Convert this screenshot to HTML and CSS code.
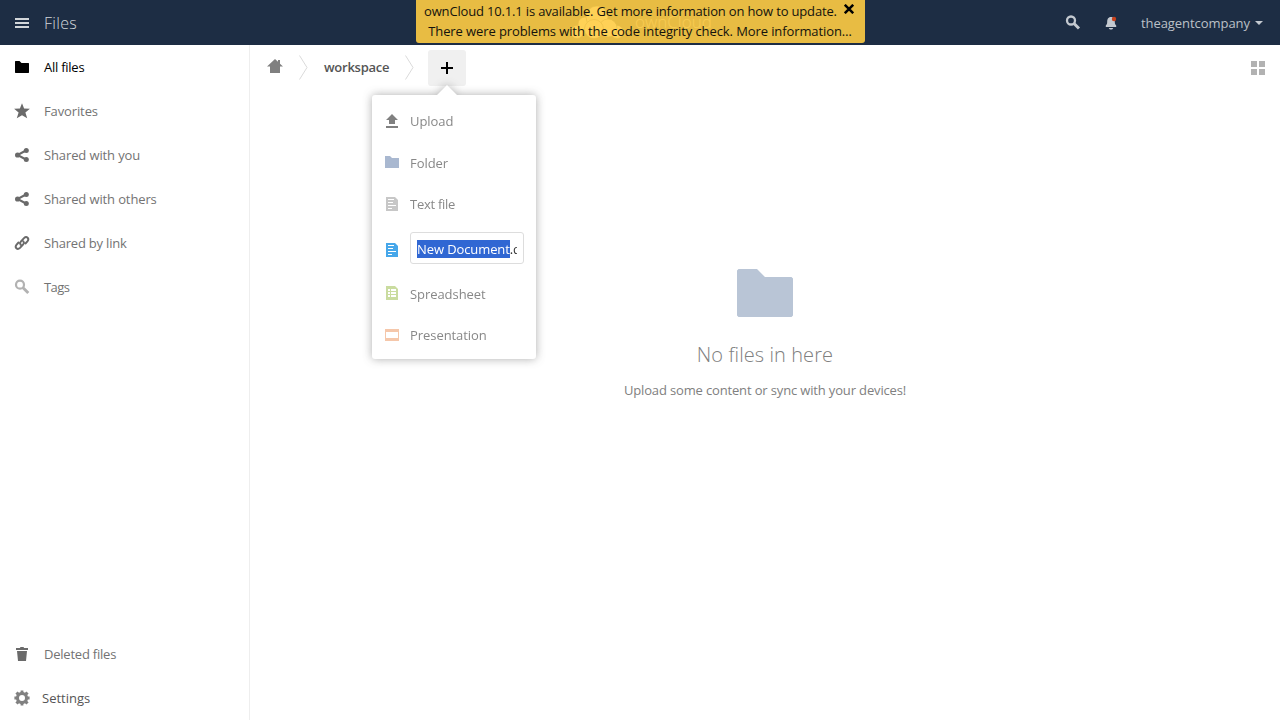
FILE: index.html
```html
<!DOCTYPE html>
<html lang="en">
<head>
<meta charset="utf-8">
<title>Files - ownCloud</title>
<link rel="stylesheet" href="styles.css">
</head>
<body>
<header class="header">
  <div class="header-left">
    <svg class="icon" width="16" height="16" viewBox="0 0 16 16" fill="#d2d6da"><path d="M1 3h14v2H1zM1 7h14v2H1zM1 11h14v2H1z"/></svg>
    <span class="app-name">Files</span>
  </div>
  <div class="brand">
    <svg width="56" height="34" viewBox="0 0 56 34" fill="#fff" stroke="#1d2d44" stroke-opacity=".6"><circle cx="8" cy="27" r="6.500"/><circle cx="16" cy="19" r="7"/><circle cx="48" cy="27" r="6.500"/><circle cx="28" cy="12" r="11"/><circle cx="39" cy="23" r="9"/><circle cx="25" cy="24" r="9.500"/></svg>
    <span>ownCloud</span>
  </div>
  <div class="header-right">
    <svg class="icon search" width="16" height="16" viewBox="0 0 16 16" fill="none" stroke="#c4c9d0"><circle cx="6" cy="5.500" r="4" stroke-width="2.300"/><path d="M9 8.500l5 5" stroke-width="3"/></svg>
    <svg class="icon bell" width="16" height="16" viewBox="0 0 16 16"><path fill="#c4c9d0" d="M8 2C5 2 4.200 4.500 4.200 7c0 2-.6 2.500-1.400 3.500V12h10.400v-1.500c-.8-1-1.400-1.500-1.400-3.500C11.800 4.500 11 2 8 2zM5.800 13h4.400c-.4 1.300-1 1.500-2.200 1.500S6.200 14.300 5.800 13z"/><circle cx="11" cy="4" r="2.200" fill="#c7411c"/></svg>
    <span class="user">theagentcompany</span>
    <svg width="8" height="4" viewBox="0 0 8 4" fill="#c4c9d0"><path d="M0 0h8L4 4z"/></svg>
  </div>
  <div class="notice">
    <div class="notice-line update">ownCloud 10.1.1 is available. Get more information on how to update.<svg class="close" width="10" height="10" viewBox="0 0 10 10" stroke="#000" stroke-width="2.500"><path d="M.8.8l8.400 8.400M9.200.8L.8 9.200"/></svg></div>
    <div class="notice-line">There were problems with the code integrity check. More information…</div>
  </div>
</header>
<div class="layout">
  <nav class="sidebar">
    <a class="nav-item active"><svg class="icon" width="16" height="16" viewBox="0 0 16 16"><path d="M1.500 2h4l2 2h7l.5.5v9l-.5.5h-13l-.5-.5v-11z"/></svg>All files</a>
    <a class="nav-item"><svg class="icon" width="16" height="16" viewBox="0 0 16 16"><path d="M8 .3l2.100 5.200 5.800.3-4.500 3.600 1.800 5.900L8 12.200l-5.200 3.100 1.800-5.900L.1 5.800l5.800-.3z"/></svg>Favorites</a>
    <a class="nav-item"><svg class="icon" width="16" height="16" viewBox="0 0 16 16"><path d="M12 3.500L3.500 8l8.500 4.500" fill="none" stroke="#6a6a6a" stroke-width="2"/><circle cx="12.300" cy="3.400" r="2.500"/><circle cx="3.600" cy="8" r="2.600"/><circle cx="12.300" cy="12.600" r="2.500"/></svg>Shared with you</a>
    <a class="nav-item"><svg class="icon" width="16" height="16" viewBox="0 0 16 16"><path d="M12 3.500L3.500 8l8.500 4.500" fill="none" stroke="#6a6a6a" stroke-width="2"/><circle cx="12.300" cy="3.400" r="2.500"/><circle cx="3.600" cy="8" r="2.600"/><circle cx="12.300" cy="12.600" r="2.500"/></svg>Shared with others</a>
    <a class="nav-item link"><svg class="icon" width="16" height="16" viewBox="0 0 16 16" fill="none" stroke="#6a6a6a" stroke-width="2"><path d="M7.500 10.500C5.900 9.500 5.800 7.700 7 6.400l3-3.300c2.700-2.600 5.700.4 3.400 3.300L11 9M8.500 5.500c1.600 1 1.700 2.800.5 4.100l-3 3.300c-2.700 2.600-5.700-.4-3.400-3.300L5 7"/></svg>Shared by link</a>
    <a class="nav-item tags"><svg class="icon" width="16" height="16" viewBox="0 0 16 16" fill="none" stroke="#b2b2b2"><circle cx="6" cy="5.700" r="4" stroke-width="2.200"/><path d="M9 8.700l5.300 5.300" stroke-width="2.900"/></svg>Tags</a>
    <a class="nav-item trash"><svg class="icon" width="16" height="16" viewBox="0 0 16 16"><path d="M6.500 1h3l.6 1H14v2H2V2h3.900zM3 5h10l-1 10H4z"/></svg>Deleted files</a>
    <a class="nav-item settings"><svg class="icon" width="16" height="16" viewBox="0 0 16 16" fill="#808080"><path fill-rule="evenodd" d="M6.600.4h2.800v1.700l1.600.6 1.400-1.300 2.200 2.200L13.300 5l.6 1.600h1.700v2.800h-1.700l-.6 1.600 1.300 1.400-2.200 2.200-1.400-1.300-1.600.6v1.700H6.600v-1.700L5 13.300l-1.400 1.300-2.200-2.200L2.700 11l-.6-1.600H.4V6.600h1.700L2.700 5 1.400 3.600l2.200-2.200L5 2.700l1.600-.6zM8 5a3 3 0 100 6 3 3 0 000-6z"/></svg>Settings</a>
  </nav>
  <main class="content">
    <div class="controls">
      <svg class="home" width="16" height="16" viewBox="0 0 16 16" fill="#808080"><path d="M8 1L0 8.500h3V15h10V8.500h3L13 5.700V2h-2v1.800z"/></svg>
      <svg class="sep" width="9" height="25" viewBox="0 0 9 25" fill="none" stroke="#dadada"><path d="M.5.5l7.500 12-7.500 12"/></svg>
      <span class="crumb">workspace</span>
      <svg class="sep" width="9" height="25" viewBox="0 0 9 25" fill="none" stroke="#dadada"><path d="M.5.5l7.500 12-7.500 12"/></svg>
      <button class="add" aria-label="New"><svg width="12" height="12" viewBox="0 0 12 12"><path d="M5 0h2v5h5v2H7v5H5V7H0V5h5z"/></svg></button>
      <svg class="grid-toggle" width="14" height="14" viewBox="0 0 14 14" fill="#b2b2b2"><path d="M0 0h6v6H0zM8 0h6v6H8zM0 8h6v6H0zM8 8h6v6H8z"/></svg>
    </div>
    <section class="empty">
      <svg width="56" height="48" viewBox="0 0 56 48" fill="#b9c5d6"><path d="M1.500 0H20l8 8h26.500L56 9.500v37L54.500 48h-53L0 46.500v-45z"/></svg>
      <h2>No files in here</h2>
      <p>Upload some content or sync with your devices!</p>
    </section>
  </main>
</div>
<div class="menu">
  <div class="menu-item"><svg width="16" height="16" viewBox="0 0 16 16" fill="#808080"><path d="M8 1l6 6h-3v4H5V7H2zM2 13h12v2H2z"/></svg>Upload</div>
  <div class="menu-item"><svg class="raised" width="16" height="16" viewBox="0 0 16 16" fill="#a9b8d0"><path d="M1 2h5l2 2h7v10H1z"/></svg>Folder</div>
  <div class="menu-item tight"><svg width="16" height="16" viewBox="0 0 16 16"><path fill="#c7c7c7" d="M2 1h9l3 3v11H2z"/><path fill="#fff" d="M4 3h6v1H4zM4 6h5v1H4zM4 9h8v1H4zM4 12h4v1H4z"/></svg>Text file</div>
  <div class="menu-item"><svg class="lowered" width="16" height="16" viewBox="0 0 16 16"><path fill="#46a7ea" d="M2 1h9l3 3v11H2z"/><path fill="#fff" d="M4 3h6v1H4zM4 6h5v1H4zM4 9h8v1H4zM4 12h4v1H4z"/></svg><div class="name-field"><div class="name-value"><span class="selected">New Document</span>.docx</div></div></div>
  <div class="menu-item"><svg class="raised" width="16" height="16" viewBox="0 0 16 16"><path fill="#cadca0" d="M2 1h9l3 3v11H2z"/><path fill="#fff" d="M4 4h2v2H4zM7 4h5v2H7zM4 7h2v2H4zM7 7h5v2H7zM4 10h2v2H4zM7 10h5v2H7z"/></svg>Spreadsheet</div>
  <div class="menu-item"><svg width="16" height="16" viewBox="0 0 16 16"><path fill="#f5c7aa" fill-rule="evenodd" d="M1 2h14v12H1zM2 5v6h12V5z"/></svg>Presentation</div>
</div>
</body>
</html>
```
FILE: styles.css
```css
* { box-sizing: border-box; }
body {
  margin: 0;
  width: 1280px;
  height: 720px;
  overflow: hidden;
  display: flex;
  flex-direction: column;
  background: #fff;
  color: #555;
  font: 13px/20px "Open Sans", sans-serif;
}
svg { display: block; flex: none; }
.header {
  position: relative;
  flex: none;
  height: 45px;
  display: flex;
  align-items: center;
  justify-content: space-between;
  padding: 0 17px 0 14px;
  background: #1d2d44;
}
.header-left { display: flex; align-items: center; gap: 14px; }
.app-name { font-size: 16px; font-weight: 300; color: #d2d6da; letter-spacing: .3px; }
.brand {
  position: absolute;
  left: 569px;
  top: 5px;
  display: flex;
  align-items: center;
  gap: 10px;
  color: rgba(255, 255, 255, .75);
  font-size: 17px;
  font-weight: 300;
}
.header-right { display: flex; align-items: center; color: #bbc0c7; letter-spacing: -.05px; }
.bell { margin: 0 22px; }
.search { margin-top: 1px; }
.user { margin-right: 5px; }
.notice {
  position: absolute;
  left: 416px;
  top: 0;
  width: 449px;
  height: 43px;
  padding: 1px 8px;
  border-radius: 0 0 3px 3px;
  background: rgba(255, 204, 68, .9);
  color: #14130d;
  white-space: nowrap;
  letter-spacing: -.1px;
}
.notice-line { display: flex; justify-content: center; padding-right: 1px; }
.update { justify-content: flex-start; letter-spacing: -.16px; }
.close { margin: 3px 0 0 7px; }
.layout { flex: 1; display: flex; min-height: 0; }
.sidebar {
  width: 250px;
  flex: none;
  display: flex;
  flex-direction: column;
  border-right: 1px solid #eee;
}
.nav-item {
  height: 44px;
  display: flex;
  align-items: center;
  gap: 14px;
  padding-left: 14px;
  color: #737373;
  fill: #6a6a6a;
  letter-spacing: -.12px;
}
.active { color: #000; fill: #000; letter-spacing: -.25px; }
.link { letter-spacing: -.2px; }
.tags { letter-spacing: -.55px; }
.trash { margin-top: auto; letter-spacing: -.22px; }
.settings { gap: 12px; color: #555; letter-spacing: 0; }
.content { flex: 1; display: flex; flex-direction: column; }
.controls {
  height: 44px;
  display: flex;
  align-items: center;
  padding: 0 15px 0 17px;
}
.home { margin: 0 16px 2px 0; }
.sep { margin-right: 15px; }
.crumb { width: 66px; margin: 0 15px 0 1px; font-weight: 600; color: #555; letter-spacing: -.25px; }
.add {
  width: 38px;
  height: 36px;
  margin-top: 2px;
  margin-left: -1px;
  padding: 0;
  border: 0;
  border-radius: 3px;
  background: #f0f0f0;
  display: grid;
  place-items: center;
}
.grid-toggle { margin: 2px 0 0 auto; }
.empty {
  display: flex;
  flex-direction: column;
  align-items: center;
  padding-top: 180px;
  color: #808080;
}
.empty h2 { margin: 23px 0 10px; font-size: 20px; line-height: 30px; font-weight: 300; letter-spacing: .08px; }
.empty p { margin: 0; letter-spacing: -.15px; }
.menu {
  position: absolute;
  left: 372px;
  top: 95px;
  width: 164px;
  height: 264px;
  padding: 5px 12px;
  display: grid;
  grid-template-rows: 42px 41px 41px 49px 41px 41px;
  border-radius: 3px;
  background: #fff;
  color: #888;
  letter-spacing: -.06px;
  filter: drop-shadow(0 0 5px rgba(50, 50, 50, .4));
}
.menu::before {
  content: "";
  position: absolute;
  left: 65px;
  top: -10px;
  border: 10px solid transparent;
  border-top: 0;
  border-bottom-color: #fff;
}
.menu-item { display: flex; align-items: center; gap: 10px; }
.tight { letter-spacing: -.28px; }
.raised { margin-bottom: 2px; }
.lowered { margin-top: 2px; }
.name-field {
  width: 114px;
  height: 32px;
  margin-bottom: 2px;
  padding: 7px 6px 5px;
  border: 1px solid #ddd;
  border-radius: 3px;
  color: #333;
}
.name-value { overflow: hidden; white-space: nowrap; line-height: 18px; letter-spacing: -.1px; }
.selected { display: inline-block; background: #3067d3; color: #fff; }
```
